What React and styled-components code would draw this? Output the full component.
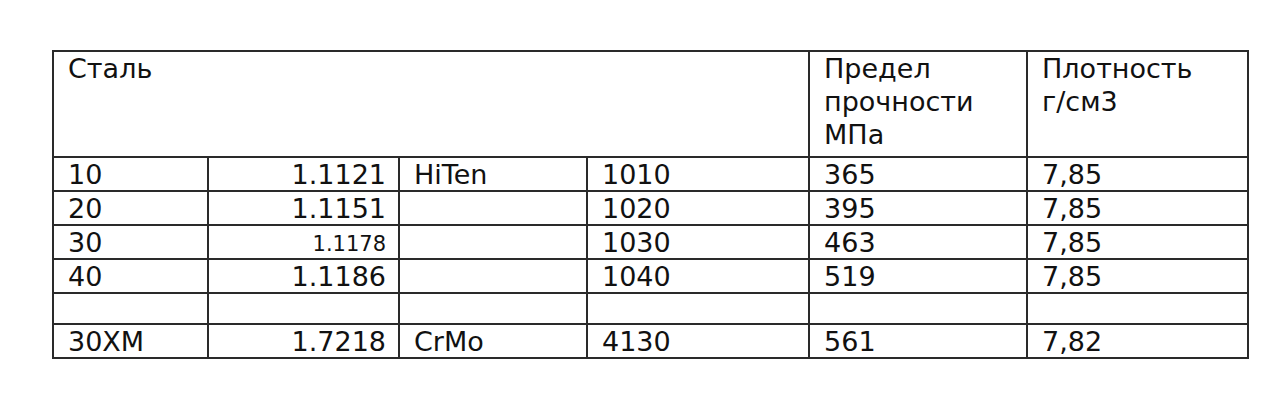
import styled, { createGlobalStyle } from "styled-components";

const GlobalStyle = createGlobalStyle`
  html, body {
    margin: 0;
    background: #fff;
  }
`;

const Page = styled.div`
  padding: 50px 0 0 52px;
  width: 1280px;
  height: 404px;
  box-sizing: border-box;
  font-family: "DejaVu Sans", "Liberation Sans", sans-serif;
  color: #111;
`;

const Table = styled.table`
  border-collapse: collapse;
  table-layout: fixed;
  width: 1195px;
  border: 2px solid #2a2a2a;
`;

const Cell = styled.td`
  border: 2px solid #2a2a2a;
  padding: ${(p) =>
    p.$head ? "0 14px" : p.$small ? "4px 12px 0 14px" : p.$right ? "1px 12px 0 14px" : "1px 14px 0 14px"};
  height: ${(p) => (p.$head ? "106px" : "31px")};
  box-sizing: border-box;
  font-weight: 400;
  font-size: ${(p) => (p.$small ? "21px" : "27px")};
  line-height: ${(p) => (p.$head ? "33px" : p.$small ? "28px" : "31px")};
  text-align: ${(p) => (p.$right ? "right" : "left")};
  vertical-align: top;
  white-space: ${(p) => (p.$head ? "normal" : "nowrap")};
  overflow: hidden;
`;

const NoWrap = styled.span`
  white-space: nowrap;
`;

const widths = [155, 191, 188, 222, 218, 221];

const rows = [
  ["10", "1.1121", "HiTen", "1010", "365", "7,85"],
  ["20", "1.1151", "", "1020", "395", "7,85"],
  ["30", "1.1178", "", "1030", "463", "7,85", true],
  ["40", "1.1186", "", "1040", "519", "7,85"],
  ["", "", "", "", "", ""],
  ["30ХМ", "1.7218", "CrMo", "4130", "561", "7,82"],
];

export default function App() {
  return (
    <>
      <GlobalStyle />
      <Page>
        <Table>
          <colgroup>
            {widths.map((w, i) => (
              <col key={i} style={{ width: w }} />
            ))}
          </colgroup>
          <thead>
            <tr>
              <Cell as="th" $head colSpan={4}>
                Сталь
              </Cell>
              <Cell as="th" $head>
                Предел прочности МПа
              </Cell>
              <Cell as="th" $head>
                Плотность <NoWrap>г/см3</NoWrap>
              </Cell>
            </tr>
          </thead>
          <tbody>
            {rows.map((r, i) => (
              <tr key={i}>
                <Cell>{r[0]}</Cell>
                <Cell $right $small={r[6]}>
                  {r[1]}
                </Cell>
                <Cell>{r[2]}</Cell>
                <Cell>{r[3]}</Cell>
                <Cell>{r[4]}</Cell>
                <Cell>{r[5]}</Cell>
              </tr>
            ))}
          </tbody>
        </Table>
      </Page>
    </>
  );
}
